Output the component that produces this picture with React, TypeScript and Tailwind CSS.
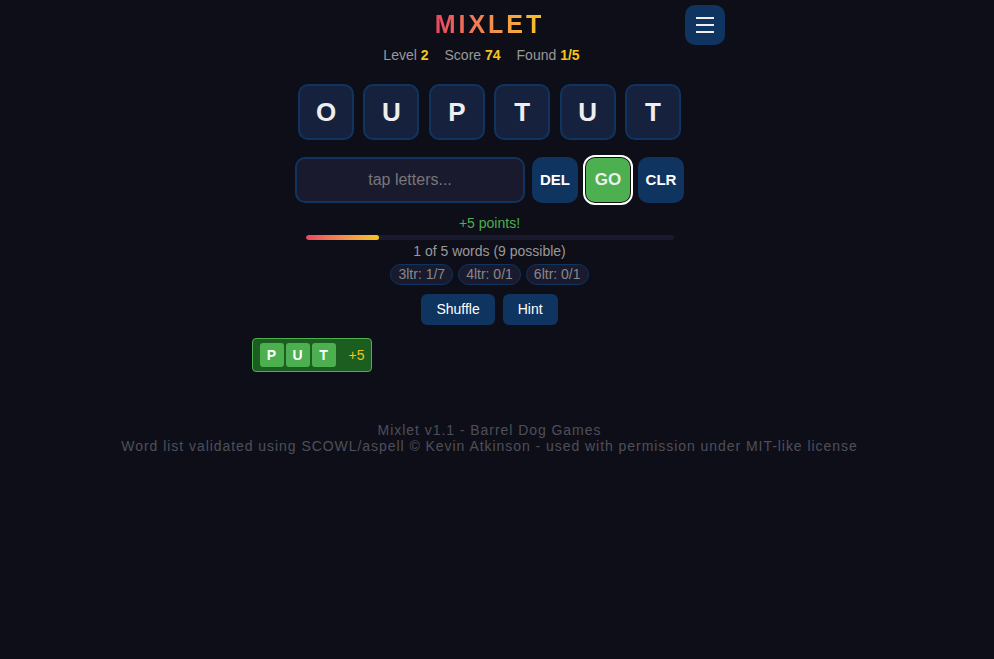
const TILES = ['O', 'U', 'P', 'T', 'U', 'T'];
const CHIPS = ['3ltr: 1/7', '4ltr: 0/1', '6ltr: 0/1'];

export default function App() {
  return (
    <div
      className="min-h-[659px] w-full bg-[#0e0e18] pr-[15px] text-[#eee]"
      style={{ fontFamily: '"Liberation Sans", Arial, sans-serif' }}
    >
      <div className="mx-auto flex w-[490px] flex-col items-center">
        {/* header */}
        <div className="relative flex h-[45px] w-[470px] items-start justify-center">
          <h1 className="mt-[12px] bg-gradient-to-r from-[#e94560] to-[#f5c518] bg-clip-text text-[25px] font-bold leading-[25px] tracking-[3px] text-transparent">
            MIXLET
          </h1>
          <button className="absolute right-0 top-[5px] flex h-10 w-10 items-center justify-center rounded-[10px] bg-[#0f3460] text-white">
            <svg width="18" height="16" viewBox="0 0 18 16" fill="none" stroke="#eee" strokeWidth="2">
              <line x1="0" y1="1" x2="18" y2="1" />
              <line x1="0" y1="8" x2="18" y2="8" />
              <line x1="0" y1="15" x2="18" y2="15" />
            </svg>
          </button>
        </div>

        <div className="flex h-5 items-center text-[14px] text-[#999]">
          <span className="mr-4">
            Level <b className="text-[#f5c518]">2</b>
          </span>
          <span className="mr-4">
            Score <b className="text-[#f5c518]">74</b>
          </span>
          <span className="mr-4">
            Found <b className="text-[#f5c518]">1/5</b>
          </span>
        </div>

        {/* letter tiles */}
        <div className="mt-[19px] flex gap-[9.4px]">
          {TILES.map((l, i) => (
            <div
              key={i}
              className="flex h-14 w-14 items-center justify-center rounded-[10px] border-2 border-[#0f3460] bg-[#16213e] text-[26px] font-bold text-[#eee]"
            >
              {l}
            </div>
          ))}
        </div>

        {/* input row */}
        <div className="mt-[17px] flex gap-[7px]">
          <div className="flex h-[46px] w-[230px] items-center justify-center rounded-[10px] border-2 border-[#0f3460] bg-[#1a1a2e] text-[16px] text-[#777]">
            tap letters...
          </div>
          <button className="h-[46px] w-[46px] rounded-[10px] bg-[#0f3460] text-[15px] font-bold text-white">
            DEL
          </button>
          <button className="h-[46px] w-[46px] rounded-[10px] border border-[#111] bg-[#4caf50] text-[17px] font-bold text-[#eee] outline-2 outline-offset-0 outline-white">
            GO
          </button>
          <button className="h-[46px] w-[46px] rounded-[10px] bg-[#0f3460] text-[15px] font-bold text-white">
            CLR
          </button>
        </div>

        <div className="mt-[10px] flex h-5 items-center text-[14px] text-[#4caf50]">+5 points!</div>

        <div className="mt-[2px] h-[5px] w-[368px] overflow-hidden rounded-full bg-[#1a1a2e]">
          <div className="h-full rounded-full bg-gradient-to-r from-[#e94560] to-[#f5c518]" style={{ width: '20%' }} />
        </div>

        <div className="mt-[1px] flex h-5 items-center text-[14px] text-[#999]">1 of 5 words (9 possible)</div>

        <div className="mt-[3px] flex gap-[5px]">
          {CHIPS.map((c) => (
            <span
              key={c}
              className="flex h-[21px] items-center rounded-full border border-[#0f3460] bg-[#1a1a2e] px-[7px] text-[14px] text-[#888]"
            >
              {c}
            </span>
          ))}
        </div>

        <div className="mt-[9px] flex gap-2">
          <button className="h-[31px] rounded-md bg-[#0f3460] px-[15px] text-[14px] text-white">Shuffle</button>
          <button className="h-[31px] rounded-md bg-[#0f3460] px-[15px] text-[14px] text-white">Hint</button>
        </div>

        {/* found words */}
        <div className="mt-[13px] flex w-full pl-[7px]">
          <div className="flex h-[34px] items-center rounded border border-[#4caf50] bg-[#1b5e20] pl-[7px] pr-[7px]">
            <div className="flex gap-[2px]">
              {['P', 'U', 'T'].map((l) => (
                <span
                  key={l}
                  className="flex h-6 w-6 items-center justify-center rounded-[3px] bg-[#4caf50] text-[14px] font-bold text-white"
                >
                  {l}
                </span>
              ))}
            </div>
            <span className="ml-[13px] text-[14px] text-[#f5c518]">+5</span>
          </div>
        </div>
      </div>

      <footer className="mt-[50px] text-center text-[14px] leading-4 tracking-[0.95px] text-[#4f4f5a]">
        <div>Mixlet v1.1 - Barrel Dog Games</div>
        <div>Word list validated using SCOWL/aspell © Kevin Atkinson - used with permission under MIT-like license</div>
      </footer>
    </div>
  );
}
